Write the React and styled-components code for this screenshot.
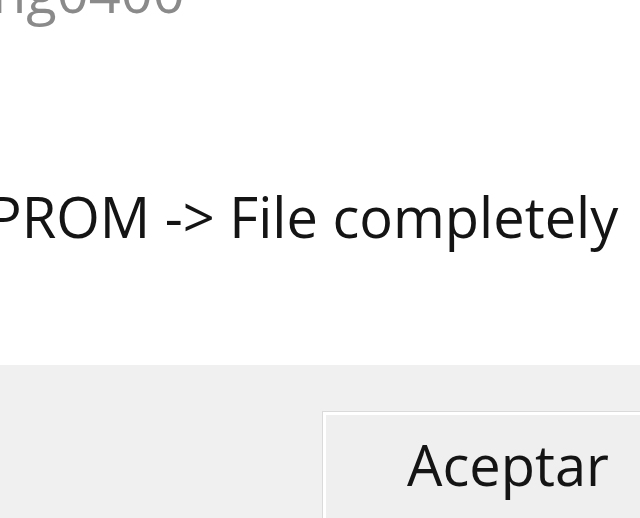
import styled, { createGlobalStyle } from 'styled-components';

const GlobalStyle = createGlobalStyle`
    html, body {
        margin : 0;
        padding : 0;
        overflow : hidden;
        background : #ffffff;
    }
    body {
        font-family : "Open Sans", "Noto Sans", sans-serif;
    }
`

function App(){
    return(
        <Dialog>
            <GlobalStyle/>
            <Content>
                <Messages>
                    <Message $muted>ng0400</Message>
                    <Message>PROM -&gt; File completely</Message>
                </Messages>
            </Content>
            <Footer>
                <Button>Aceptar</Button>
            </Footer>
        </Dialog>
    )
}

export default App

const Dialog = styled.div`
    width : 640px;
    height : 518px;
    display : flex;
    flex-direction : column;
    overflow : hidden;
`

const Content = styled.div`
    flex : none;
    height : 365px;
    background : #ffffff;
`

const Messages = styled.div`
    display : flex;
    flex-direction : column;
    gap : 149px;
    margin-top : -47px;
    margin-left : -12px;
`

const Message = styled.div`
    font-size : 56px;
    line-height : 76px;
    white-space : nowrap;
    color : ${props => props.$muted ? '#8a8a8a' : '#141414'};
    margin-left : ${props => props.$muted ? '4px' : '0'};
`

const Footer = styled.div`
    flex : 1;
    background : #f0f0f0;
    display : flex;
    justify-content : flex-start;
    align-items : flex-start;
    padding : 46px 0 0 322px;
`

const Button = styled.button`
    flex : none;
    width : 372px;
    height : 112px;
    box-sizing : border-box;
    background : #efefef;
    border : 1px solid #dadada;
    box-shadow : inset 0 0 0 3px #ffffff;
    font-family : "Open Sans", "Noto Sans", sans-serif;
    font-size : 56px;
    color : #141414;
    padding : 0 0 6px 0;
`
